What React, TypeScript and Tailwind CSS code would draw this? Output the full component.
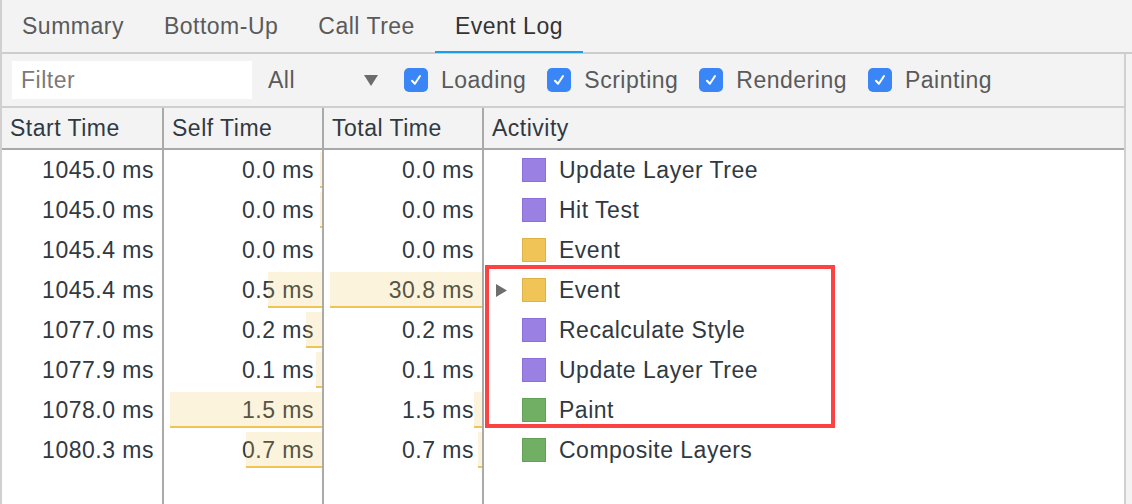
const swatch = {
  purple: 'bg-[#9b80e4] border-[#8c70da]',
  yellow: 'bg-[#f0c457] border-[#e0b246]',
  green: 'bg-[#71b064] border-[#62a055]',
}

type Row = {
  start: string
  self: string
  selfBar: number
  total: string
  totalBar: number
  kind: 'purple' | 'yellow' | 'green'
  name: string
  open?: boolean
}

const rows: Row[] = [
  { start: '1045.0 ms', self: '0.0 ms', selfBar: 2, total: '0.0 ms', totalBar: 0, kind: 'purple', name: 'Update Layer Tree' },
  { start: '1045.0 ms', self: '0.0 ms', selfBar: 2, total: '0.0 ms', totalBar: 0, kind: 'purple', name: 'Hit Test' },
  { start: '1045.4 ms', self: '0.0 ms', selfBar: 0, total: '0.0 ms', totalBar: 0, kind: 'yellow', name: 'Event' },
  { start: '1045.4 ms', self: '0.5 ms', selfBar: 54, total: '30.8 ms', totalBar: 152, kind: 'yellow', name: 'Event', open: true },
  { start: '1077.0 ms', self: '0.2 ms', selfBar: 16, total: '0.2 ms', totalBar: 0, kind: 'purple', name: 'Recalculate Style' },
  { start: '1077.9 ms', self: '0.1 ms', selfBar: 6, total: '0.1 ms', totalBar: 0, kind: 'purple', name: 'Update Layer Tree' },
  { start: '1078.0 ms', self: '1.5 ms', selfBar: 152, total: '1.5 ms', totalBar: 8, kind: 'green', name: 'Paint' },
  { start: '1080.3 ms', self: '0.7 ms', selfBar: 76, total: '0.7 ms', totalBar: 4, kind: 'green', name: 'Composite Layers' },
]

const tabs = ['Summary', 'Bottom-Up', 'Call Tree', 'Event Log']
const filters = ['Loading', 'Scripting', 'Rendering', 'Painting']

function Bar({ width }: { width: number }) {
  if (!width) return null
  return (
    <span
      className="absolute right-0 top-[2px] bottom-[2px] border-b-2 border-[#f0c354] bg-[#f0c354]/20"
      style={{ width }}
    />
  )
}

function Check() {
  return (
    <span className="flex h-[24px] w-[24px] items-center justify-center rounded-[5px] bg-[#3b86f6]">
      <svg width="14" height="14" viewBox="0 0 14 14">
        <path d="M3 7.8 L5.9 10.8 L11 3" fill="none" stroke="white" strokeWidth="2" strokeLinecap="round" strokeLinejoin="round" />
      </svg>
    </span>
  )
}

export default function App() {
  return (
    <div
      className="relative flex h-[504px] w-[1132px] flex-col overflow-hidden border-l-2 border-[#d0d0d0] bg-white text-[23px] tracking-[0.5px] text-[#303942]"
      style={{ fontFamily: '"Liberation Sans", Arial, sans-serif' }}
    >
      {/* tabs */}
      <div className="flex h-[54px] shrink-0 border-b-2 border-[#cdcdcd] bg-[#f3f3f3]">
        {tabs.map((t) => (
          <div
            key={t}
            className={
              t === 'Event Log'
                ? 'relative flex items-center px-5 text-[#333333]'
                : 'relative flex items-center px-5 text-[#5a5a5a]'
            }
          >
            {t}
            {t === 'Event Log' && (
              <span className="absolute bottom-[-1px] left-0 right-0 h-[2px] bg-[#1a9eea]" />
            )}
          </div>
        ))}
      </div>

      <div className="flex min-h-0 flex-1">
        <div className="flex min-w-0 flex-1 flex-col">
          {/* toolbar */}
          <div className="flex h-[54px] shrink-0 items-center border-b-2 border-[#cfcfcf] bg-[#f3f3f3] text-[#5a5a5a]">
            <div className="ml-[10px] flex h-[38px] w-[240px] items-center bg-white pl-[9px] text-[#7a7a7a]">
              Filter
            </div>
            <div className="ml-[16px] flex w-[110px] items-center">
              <span>All</span>
              <svg className="ml-auto" width="14" height="11" viewBox="0 0 14 11">
                <path d="M0 0 L14 0 L7 11 Z" fill="#6b6b6b" />
              </svg>
            </div>
            {filters.map((f, i) => (
              <div key={f} className={i === 0 ? 'ml-[26px] flex items-center gap-[13px]' : 'ml-[21px] flex items-center gap-[13px]'}>
                <Check />
                <span>{f}</span>
              </div>
            ))}
          </div>

          {/* header */}
          <div className="flex h-[42px] shrink-0 border-b-2 border-[#a9a9a9] bg-[#f3f3f3]">
            <div className="flex w-[162px] items-center border-r-2 border-[#aaaaaa] pl-2">Start Time</div>
            <div className="flex w-[160px] items-center border-r-2 border-[#aaaaaa] pl-2">Self Time</div>
            <div className="flex w-[160px] items-center border-r-2 border-[#aaaaaa] pl-2">Total Time</div>
            <div className="flex flex-1 items-center pl-2">Activity</div>
          </div>

          {/* rows */}
          {rows.map((r, i) => (
            <div key={i} className="flex h-[40px] shrink-0">
              <div className="flex w-[162px] items-center justify-end border-r-2 border-[#aaaaaa] pr-2">{r.start}</div>
              <div className="relative flex w-[160px] items-center justify-end border-r-2 border-[#aaaaaa] pr-2">
                {r.self}
                <Bar width={r.selfBar} />
              </div>
              <div className="relative flex w-[160px] items-center justify-end border-r-2 border-[#aaaaaa] pr-2">
                {r.total}
                <Bar width={r.totalBar} />
              </div>
              <div className="flex flex-1 items-center">
                <span className="flex w-[38px] pl-[12px]">
                  {r.open && (
                    <svg width="12" height="13" viewBox="0 0 12 13">
                      <path d="M0 0 L11 6.5 L0 13 Z" fill="#6e6e6e" />
                    </svg>
                  )}
                </span>
                <span className={'h-[24px] w-[24px] border ' + swatch[r.kind]} />
                <span className="ml-[13px]">{r.name}</span>
              </div>
            </div>
          ))}
          <div className="flex flex-1">
            <div className="w-[162px] border-r-2 border-[#aaaaaa]" />
            <div className="w-[160px] border-r-2 border-[#aaaaaa]" />
            <div className="w-[160px] border-r-2 border-[#aaaaaa]" />
            <div className="flex-1" />
          </div>
        </div>
        <div className="w-[8px] shrink-0 border-l-2 border-[#d0d0d0] bg-[#f3f3f3]" />
      </div>

      {/* highlight */}
      <div className="absolute left-[483px] top-[265px] h-[163px] w-[350px] border-4 border-[#fc4242]" />
    </div>
  )
}
